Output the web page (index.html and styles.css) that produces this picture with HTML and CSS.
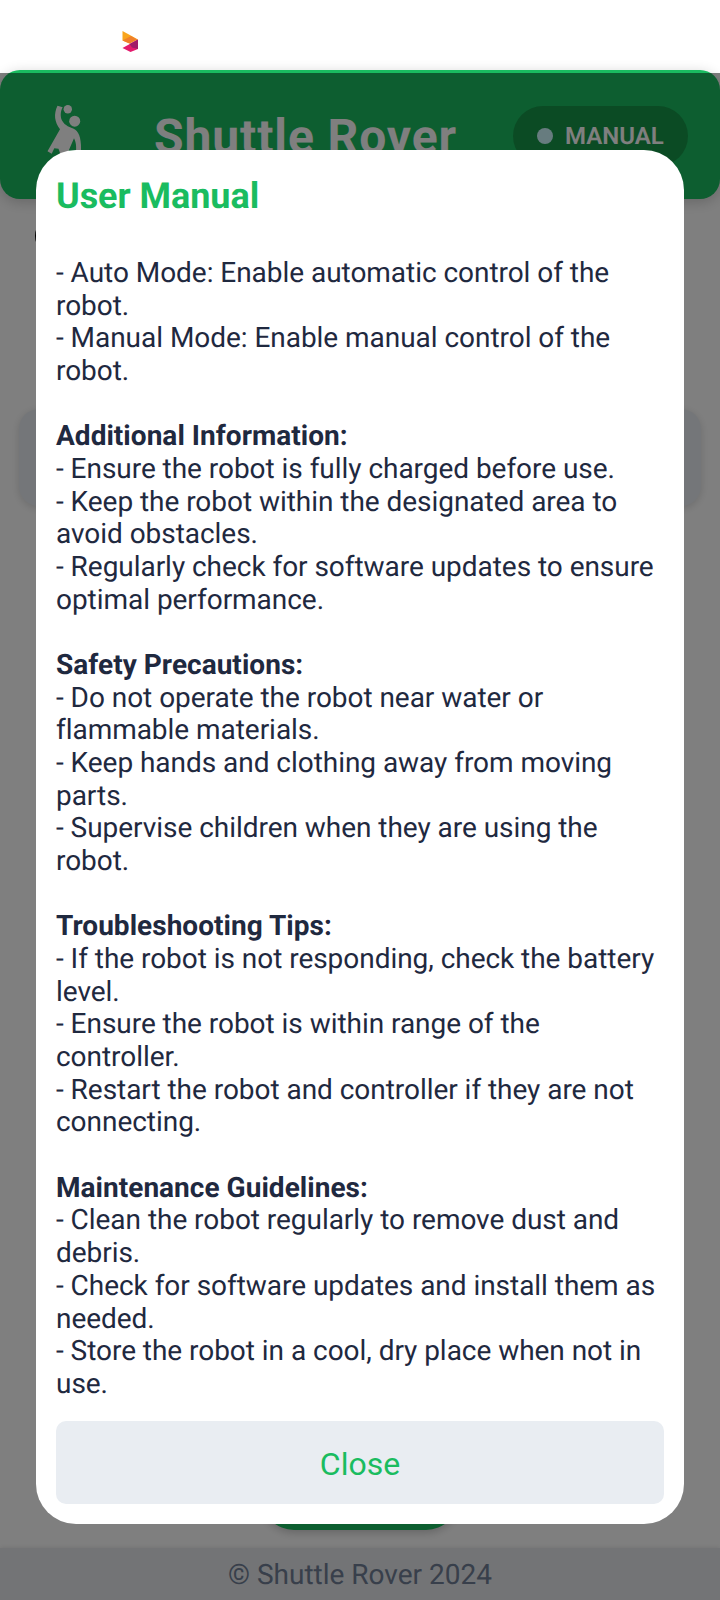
FILE: index.html
```html
<!DOCTYPE html>
<html lang="en">
<head>
<meta charset="utf-8">
<title>Shuttle Rover</title>
<link rel="stylesheet" href="styles.css">
</head>
<body>
<div class="app">
  <div class="status">
    <svg class="status-icon" width="18" height="22" viewBox="0 0 18 22">
      <path d="M.5 0L16 8.500L7.500 12.500L.5 9.500Z" fill="#f9a51d"/>
      <path d="M.5 9.500L9 5L15 8.500L7.500 12.500Z" fill="#f0802a"/>
      <path d="M.5 17L16 8.500V18L8.500 21Z" fill="#e31b6d"/>
      <path d="M7.500 13L16 8.500V18L10 16.500Z" fill="#a01a68"/>
    </svg>
  </div>
  <header class="header">
    <svg class="player" width="36" height="56" viewBox="0 0 36 56">
      <circle cx="20.800" cy="4.300" r="4.200" fill="#fff"/>
      <circle cx="27.700" cy="16.200" r="5.500" fill="#fff"/>
      <path d="M10.500 .7L15.700 2.300C13.300 6 13.200 12 15 15.500C18 21 23 22 28 24.500C33 28 34.500 36 34 48H29C29.500 41 29 37 27 33.300L21.500 46L21 54H16L13 48L11.500 43.700L7.300 43.200L4.700 48.700L.5 46.200L13 24.300C7.500 17 6.500 9 10.500 .7Z" fill="#fff"/>
    </svg>
    <h1 class="brand">Shuttle Rover</h1>
    <div class="mode"><span class="dot"></span><span class="mode-text">MANUAL</span></div>
  </header>
  <main class="content">
    <div class="round"></div>
    <div class="card"></div>
    <div class="action"></div>
  </main>
  <footer class="footer"><span class="copyright">© Shuttle Rover 2024</span></footer>
</div>
<div class="overlay">
  <section class="modal">
    <h2 class="title">User Manual</h2>
    <div class="text">
      - Auto Mode: Enable automatic control of the<br>robot.<br>
      - Manual Mode: Enable manual control of the<br>robot.<br><br>
      <b>Additional Information:</b><br>
      - Ensure the robot is fully charged before use.<br>
      - Keep the robot within the designated area to<br>avoid obstacles.<br>
      - Regularly check for software updates to ensure<br>optimal performance.<br><br>
      <b>Safety Precautions:</b><br>
      - Do not operate the robot near water or<br>flammable materials.<br>
      - Keep hands and clothing away from moving<br>parts.<br>
      - Supervise children when they are using the<br>robot.<br><br>
      <b>Troubleshooting Tips:</b><br>
      - If the robot is not responding, check the battery<br>level.<br>
      - Ensure the robot is within range of the<br>controller.<br>
      - Restart the robot and controller if they are not<br>connecting.<br><br>
      <b>Maintenance Guidelines:</b><br>
      - Clean the robot regularly to remove dust and<br>debris.<br>
      - Check for software updates and install them as<br>needed.<br>
      - Store the robot in a cool, dry place when not in<br>use.
    </div>
    <button class="close">Close</button>
  </section>
</div>
</body>
</html>
```
FILE: styles.css
```css
* { box-sizing: border-box; }
body { margin: 0; font-family: Roboto, sans-serif; background: #fff; text-rendering: geometricPrecision; }
.app { width: 720px; height: 1600px; overflow: hidden; display: flex; flex-direction: column; }
.status { height: 70px; flex: none; padding: 31px 0 0 122px; }
.status-icon { display: block; }
.header {
  height: 129px; flex: none; background: #1abc60; border-radius: 20px;
  box-shadow: 0 3px 14px rgba(0,0,0,.2);
  display: flex; align-items: flex-start; padding: 35px 32px 0 47px;
}
.player { flex: none; }
.brand { margin: 4px 0 0 71px; color: #fff; font-size: 48px; line-height: 56px; font-weight: 700; letter-spacing: .9px; white-space: nowrap; width: 302px; }
.mode {
  margin: 1px 0 0 auto; width: 175px; height: 60px; border-radius: 30px; background: #169648;
  display: flex; align-items: center; padding-left: 24px; gap: 12px;
}
.dot { width: 16px; height: 16px; border-radius: 50%; background: #cff8ff; }
.mode-text { color: #fff; font-size: 24px; font-weight: 600; }
.content { flex: 1; display: flex; flex-direction: column; padding: 17px 19px 18px; }
.round { width: 40px; height: 40px; border-radius: 50%; background: #000; margin-left: 16px; }
.card { height: 97px; margin-top: 153px; border-radius: 20px; background: #e9edf2; box-shadow: 0 2px 8px rgba(0,0,0,.15); }
.action { width: 196px; height: 80px; margin: auto auto 0; border-radius: 32px; background: #1abc60; box-shadow: 0 3px 8px rgba(0,0,0,.2); }
.footer { height: 52px; flex: none; background: #e7e9ec; text-align: center; box-shadow: 0 0 5px rgba(0,0,0,.12); }
.copyright { font-size: 28px; line-height: 53px; color: #717f96; }
.overlay { position: absolute; left: 0; top: 73px; width: 720px; height: 1527px; background: rgba(0,0,0,.5); padding: 77px 36px 0; }
.modal { height: 1374px; background: #fff; border-radius: 40px; padding: 25px 20px 20px; display: flex; flex-direction: column; }
.title { margin: 0; font-size: 36px; line-height: 43px; font-weight: 700; letter-spacing: -.05px; color: #1abc60; }
.text { margin-top: 39px; font-size: 28px; line-height: 32.67px; letter-spacing: -.04px; color: #1f293f; white-space: nowrap; }
.text b { letter-spacing: .03px; }
.close { margin-top: auto; height: 83px; flex: none; border: 0; border-radius: 10px; background: #e9edf2; color: #1abc60; font: 32px Roboto, sans-serif; padding: 2px 0 0; }
```
